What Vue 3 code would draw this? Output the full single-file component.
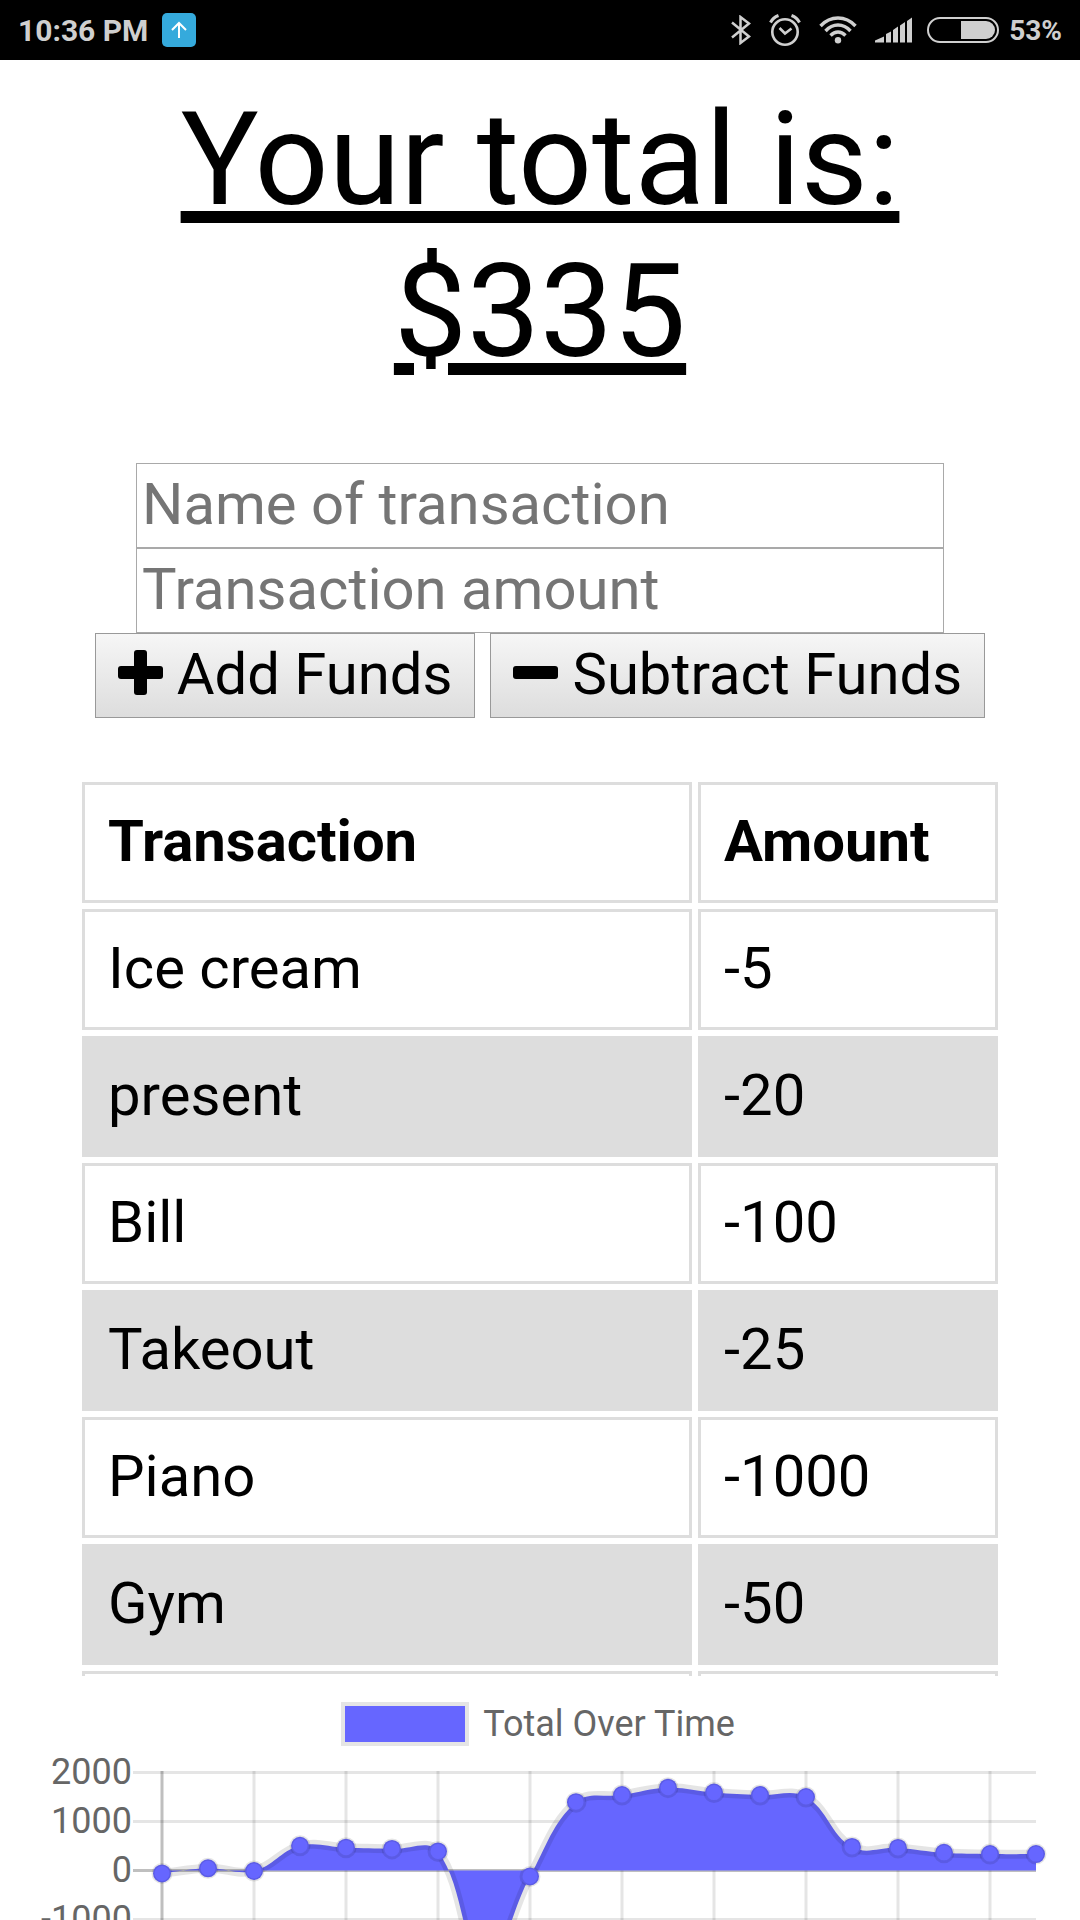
<script setup>
import { ref, computed } from 'vue'

const name = ref('')
const amount = ref('')

const transactions = [
  { name: 'Ice cream', amount: -5 },
  { name: 'present', amount: -20 },
  { name: 'Bill', amount: -100 },
  { name: 'Takeout', amount: -25 },
  { name: 'Piano', amount: -1000 },
  { name: 'Gym', amount: -50 },
  { name: '', amount: '' }
]

const totals = [
  -60, 45, -10, 505, 465, 440, 390, -2000, -120, 1395, 1540, 1690, 1590, 1540,
  1500, 480, 460, 360, 335, 335
]

const left = 162
const stepX = 46
const zeroY = 110.5
const unit = 49

const ticks = [2000, 1000, 0, -1000].map((value) => ({
  value,
  y: zeroY - (value / 1000) * unit
}))

const points = totals.map((value, i) => ({
  x: left + i * stepX,
  y: zeroY - (value / 1000) * unit
}))

const right = points[points.length - 1].x
const columns = points.filter((_, i) => i % 2 === 0).map((p) => p.x)

// Smooth curve through the points with a tension of 0.4
const curve = computed(() => {
  const tension = 0.4
  const controls = points.map((p, i) => {
    const prev = points[i - 1] || p
    const next = points[i + 1] || p
    const a = Math.hypot(p.x - prev.x, p.y - prev.y)
    const b = Math.hypot(next.x - p.x, next.y - p.y)
    const fa = (tension * a) / (a + b)
    const fb = (tension * b) / (a + b)
    return {
      inX: p.x - fa * (next.x - prev.x),
      inY: p.y - fa * (next.y - prev.y),
      outX: p.x + fb * (next.x - prev.x),
      outY: p.y + fb * (next.y - prev.y)
    }
  })
  return points
    .map((p, i) => {
      if (i === 0) return `M${p.x} ${p.y}`
      const c0 = controls[i - 1]
      const c1 = controls[i]
      return `C${c0.outX} ${c0.outY} ${c1.inX} ${c1.inY} ${p.x} ${p.y}`
    })
    .join(' ')
})

const area = computed(() => `${curve.value} L${right} ${zeroY} L${left} ${zeroY} Z`)
</script>

<template>
  <div class="screen">
    <header class="status">
      <div class="status-side">
        <span class="time">10:36 PM</span>
        <svg class="upload" width="34" height="34" viewBox="0 0 34 34" aria-hidden="true">
          <rect width="34" height="34" rx="5" fill="#35aadc" />
          <path d="M17 25V10M10 17l7-7 7 7" fill="none" stroke="#fff" stroke-width="2" />
        </svg>
      </div>
      <div class="status-side">
        <svg class="bluetooth" width="20" height="30" viewBox="0 0 20 30" aria-hidden="true">
          <path d="M1 7.500L18 21.500L9.500 28V2L18 8.500L1 22.500" fill="none" stroke="#cfcfcf" stroke-width="2.500" />
        </svg>
        <svg class="alarm" width="32" height="32" viewBox="0 0 32 32" fill="none" stroke="#cfcfcf" aria-hidden="true">
          <circle cx="16" cy="18" r="12.700" stroke-width="2.600" />
          <path d="M10.500 14l5.500 5.500 6.500-5" stroke-width="2.600" />
          <path d="M1.500 8.500Q4 3.500 9.500 1.500M22.500 1.500Q28 3.500 30.500 8.500" stroke-width="3" />
        </svg>
        <svg class="wifi" width="38" height="28" viewBox="0 0 38 28" fill="none" stroke="#cfcfcf" aria-hidden="true">
          <path d="M1.500 10Q9 2 19 2T36.500 10" stroke-width="3.400" />
          <path d="M6.500 15Q12 9 19 9T31.500 15" stroke-width="3.400" />
          <path d="M11.500 19.500Q15 16 19 16T26.500 19.500" stroke-width="3.400" />
          <circle cx="19" cy="24.300" r="3.200" fill="#cfcfcf" stroke="none" />
        </svg>
        <svg class="signal" width="37" height="26" viewBox="0 0 37 26" fill="#cfcfcf" aria-hidden="true">
          <path d="M0 25.500V23.500L9 19.500V25.500zM11 25.500V17L16 14.500V25.500zM18 25.500V13L23 9.500V25.500zM25 25.500V8.500L30 5V25.500zM32 25.500V4L37 .5V25.500z" />
        </svg>
        <svg class="battery" width="72" height="26" viewBox="0 0 72 26" aria-hidden="true">
          <rect x="1" y="1" width="70" height="24" rx="12" fill="none" stroke="#cfcfcf" stroke-width="2" />
          <path d="M34 4H59a9 9 0 0 1 0 18H34z" fill="#cfcfcf" />
        </svg>
        <span>53%</span>
      </div>
    </header>

    <main>
      <h1>Your total is: $335</h1>

      <form @submit.prevent>
        <input v-model="name" type="text" placeholder="Name of transaction" aria-label="Name of transaction" />
        <input v-model="amount" type="text" placeholder="Transaction amount" aria-label="Transaction amount" />
        <div class="actions">
          <button type="button">
            <svg width="45" height="45" viewBox="0 0 45 45" aria-hidden="true">
              <rect x="16" width="13" height="45" rx="3" />
              <rect y="16" width="45" height="13" rx="3" />
            </svg>
            <span>Add Funds</span>
          </button>
          <button type="button">
            <svg width="45" height="45" viewBox="0 0 45 45" aria-hidden="true">
              <rect y="16" width="45" height="13" rx="3" />
            </svg>
            <span>Subtract Funds</span>
          </button>
        </div>
      </form>

      <div class="history">
        <table>
          <thead>
            <tr>
              <th scope="col">Transaction</th>
              <th scope="col" class="amount">Amount</th>
            </tr>
          </thead>
          <tbody>
            <tr v-for="(t, i) in transactions" :key="i">
              <td>{{ t.name }}</td>
              <td>{{ t.amount }}</td>
            </tr>
          </tbody>
        </table>
      </div>

      <section class="chart" aria-label="Total Over Time">
        <div class="legend">
          <span class="swatch"></span>
          <span>Total Over Time</span>
        </div>
        <svg class="plot" viewBox="0 0 1080 320">
          <g v-for="t in ticks" :key="t.value">
            <line x1="133" :x2="right" :y1="t.y" :y2="t.y" :class="['grid', { axis: t.value === 0 }]" />
            <text x="132" :y="t.y + 11" text-anchor="end">{{ t.value }}</text>
          </g>
          <line v-for="(x, i) in columns" :key="x" :x1="x" :x2="x" y1="11" y2="290" :class="['grid', { axis: i === 0 }]" />
          <path :d="area" class="area" />
          <path :d="curve" class="curve" />
          <circle v-for="p in points" :key="p.x" :cx="p.x" :cy="p.y" r="9" class="point" />
        </svg>
      </section>
    </main>
  </div>
</template>

<style>
body {
  margin: 0;
  background: #fff;
}
</style>

<style scoped>
.screen {
  height: 100vh;
  overflow: hidden;
  background: #fff;
  color: #000;
  font-family: Roboto, "Liberation Sans", sans-serif;
  font-size: 58px;
}

.status {
  display: flex;
  justify-content: space-between;
  height: 60px;
  padding: 0 18px;
  background: #000;
  color: #cfcfcf;
  font-size: 28px;
  font-weight: 700;
}

.status-side {
  display: flex;
  align-items: center;
}

.time {
  font-size: 30px;
}

.upload {
  margin-left: 14px;
}

.alarm,
.wifi,
.signal {
  margin-left: 18px;
}

.battery {
  margin-left: 15px;
  margin-right: 10px;
}

h1 {
  margin: 0;
  padding: 24px 68px 75px;
  font-size: 130px;
  font-weight: 400;
  line-height: 152px;
  text-align: center;
  text-decoration: underline;
  text-decoration-thickness: 12px;
  text-underline-offset: 7px;
}

form {
  display: flex;
  flex-direction: column;
  align-items: center;
}

input {
  box-sizing: border-box;
  width: calc(100% - 272px);
  height: 85px;
  margin: 0;
  padding: 0 5px 3px;
  border: 1px solid #a9a9a9;
  border-radius: 0;
  background: #fff;
  color: #000;
  font: inherit;
}

input::placeholder {
  color: #757575;
  opacity: 1;
}

.actions {
  display: flex;
  gap: 15px;
}

button {
  display: flex;
  align-items: center;
  gap: 14px;
  box-sizing: border-box;
  height: 85px;
  margin: 0;
  padding: 0 22px 3px;
  border: 1px solid #999;
  border-radius: 0;
  background: linear-gradient(#f6f6f6, #ddd);
  color: #000;
  font: inherit;
  white-space: nowrap;
}

button svg {
  margin-bottom: 4px;
}

.history {
  max-height: 900px;
  margin: 58px 76px 0;
  overflow: hidden;
}

table {
  width: 100%;
  border-collapse: separate;
  border-spacing: 6px;
  table-layout: fixed;
}

th,
td {
  padding: 22px 23px 25px;
  border: 3px solid #ddd;
  line-height: 68px;
  text-align: left;
}

th {
  font-weight: 700;
}

.amount {
  width: 248px;
}

tbody tr:nth-child(even) td {
  background: #ddd;
}

.chart {
  color: #666;
  font-size: 36px;
}

.legend {
  display: flex;
  align-items: center;
  justify-content: center;
  gap: 18px;
  height: 84px;
  padding-top: 12px;
  box-sizing: border-box;
  line-height: 42px;
}

.swatch {
  width: 120px;
  height: 36px;
  background: #66f;
  box-shadow: 0 0 0 4px #e5e5e5;
}

.plot {
  display: block;
  width: 100%;
  overflow: visible;
}

.plot text {
  fill: #666;
  font-size: 36px;
}

.grid {
  stroke: rgba(0, 0, 0, 0.1);
  stroke-width: 3px;
}

.axis {
  stroke: rgba(0, 0, 0, 0.25);
}

.area {
  fill: #66f;
}

.curve {
  fill: none;
  stroke: rgba(0, 0, 0, 0.1);
  stroke-width: 9px;
}

.point {
  fill: #66f;
  stroke: rgba(0, 0, 0, 0.1);
  stroke-width: 3px;
}
</style>
